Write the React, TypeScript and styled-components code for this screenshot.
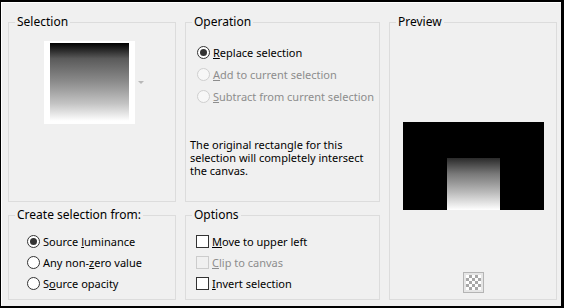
import styled, { createGlobalStyle } from 'styled-components';

const GlobalStyle = createGlobalStyle`
  body {
    margin: 0;
    font-family: "Noto Sans", "Segoe UI", sans-serif;
    font-size: 11px;
    color: #000;
  }
`;

const Frame = styled.div`
  box-sizing: border-box;
  width: 564px;
  height: 308px;
  border-style: solid;
  border-color: #000;
  border-width: 2px 3px 2px 1px;
  background: #f0f0f0;
  box-shadow: inset 1px 1px 0 #fff;
  padding: 12px 0 0 7px;
  display: grid;
  grid-template-columns: 168px 195px 168px;
  grid-template-rows: 188px 93px;
  column-gap: 9px;
  row-gap: 5px;
`;

const Group = styled.fieldset<{ $col: number; $row: string }>`
  margin: 0;
  padding: 0;
  min-width: 0;
  box-sizing: border-box;
  border: 1px solid #dcdcdc;
  display: flex;
  flex-direction: column;
  grid-column: ${(p) => p.$col};
  grid-row: ${(p) => p.$row};
`;

const Legend = styled.legend`
  margin-left: 6px;
  padding: 0 2px;
  line-height: 16px;
  font-size: 12px;
`;

const Body = styled.div<{ $pad?: string }>`
  flex: 1;
  display: flex;
  flex-direction: column;
  padding: ${(p) => p.$pad || '0'};
`;

const Center = styled.div<{ $push?: boolean }>`
  display: flex;
  align-items: center;
  justify-content: center;
  margin-top: ${(p) => (p.$push ? 'auto' : '0')};
`;

const Thumb = styled.div`
  background: #fff;
  padding: 2px 6px 3px 6px;
  margin-left: 3px;
`;

const Gradient = styled.div`
  width: 79px;
  height: 78px;
  background: linear-gradient(#000 0%, #5a5a5a 20%, #8c8c8c 50%, #c4c4c4 78%, #fff 100%);
`;

const DropArrow = styled.span`
  width: 0;
  height: 0;
  margin-left: 3px;
  border-left: 3px solid transparent;
  border-right: 3px solid transparent;
  border-top: 3px solid #b8b8b8;
`;

const Row = styled.label<{ $h?: number; $disabled?: boolean }>`
  display: flex;
  align-items: center;
  gap: 3px;
  height: ${(p) => p.$h || 21}px;
  color: ${(p) => (p.$disabled ? '#8d8d8d' : '#000')};
  white-space: nowrap;
`;

const Radio = styled.span<{ $checked?: boolean; $disabled?: boolean }>`
  box-sizing: border-box;
  width: 13px;
  height: 13px;
  border-radius: 50%;
  border: 1px solid ${(p) => (p.$disabled ? '#cfcfcf' : '#333')};
  background: ${(p) => (p.$disabled ? '#f7f7f7' : '#fff')};
  display: flex;
  align-items: center;
  justify-content: center;
  flex: none;

  &::after {
    content: '';
    width: 7px;
    height: 7px;
    border-radius: 50%;
    background: #333;
    display: ${(p) => (p.$checked ? 'block' : 'none')};
  }
`;

const Check = styled.span<{ $disabled?: boolean }>`
  box-sizing: border-box;
  width: 13px;
  height: 13px;
  border: 1px solid ${(p) => (p.$disabled ? '#cccccc' : '#333')};
  background: ${(p) => (p.$disabled ? '#f0f0f0' : '#fff')};
  flex: none;
`;

const Note = styled.p`
  margin: auto 0 24px -7px;
  line-height: 13px;
  white-space: nowrap;
`;

const PreviewImage = styled.div`
  width: 141px;
  height: 88px;
  margin-top: 92px;
  background: #000;
  display: flex;
  justify-content: center;
  align-items: flex-end;
`;

const PreviewSel = styled.div`
  width: 53px;
  height: 52px;
  background: linear-gradient(#2a2a2a 0%, #777 30%, #b8b8b8 65%, #fff 100%);
`;

const CheckerButton = styled.div`
  box-sizing: border-box;
  width: 21px;
  height: 21px;
  margin-bottom: 6px;
  border: 1px solid #b4b4b4;
  padding: 2px;
  background: #e6e6e6;

  &::after {
    content: '';
    display: block;
    width: 100%;
    height: 100%;
    background: repeating-conic-gradient(#a8a8a8 0 25%, #fff 0 50%) 0 0 / 6px 6px;
  }
`;

export default function App() {
  return (
    <>
      <GlobalStyle />
      <Frame>
        <Group $col={1} $row="1">
          <Legend>Selection</Legend>
          <Body $pad="11px 0 0 0">
            <Center>
              <Thumb>
                <Gradient />
              </Thumb>
              <DropArrow />
            </Center>
          </Body>
        </Group>
        <Group $col={2} $row="1">
          <Legend>Operation</Legend>
          <Body $pad="11px 0 0 11px">
            <Row $h={22}>
              <Radio $checked />
              <span>
                <u>R</u>eplace selection
              </span>
            </Row>
            <Row $h={22} $disabled>
              <Radio $disabled />
              <span>
                <u>A</u>dd to current selection
              </span>
            </Row>
            <Row $h={22} $disabled>
              <Radio $disabled />
              <span>
                <u>S</u>ubtract from current selection
              </span>
            </Row>
            <Note>
              The original rectangle for this
              <br />
              selection will completely intersect
              <br />
              the canvas.
            </Note>
          </Body>
        </Group>
        <Group $col={3} $row="1 / span 2">
          <Legend>Preview</Legend>
          <Body>
            <Center>
              <PreviewImage>
                <PreviewSel />
              </PreviewImage>
            </Center>
            <Center $push>
              <CheckerButton />
            </Center>
          </Body>
        </Group>
        <Group $col={1} $row="2">
          <Legend>Create selection from:</Legend>
          <Body $pad="8px 0 0 18px">
            <Row>
              <Radio $checked />
              <span>
                Source <u>l</u>uminance
              </span>
            </Row>
            <Row>
              <Radio />
              <span>
                Any non-<u>z</u>ero value
              </span>
            </Row>
            <Row>
              <Radio />
              <span>
                S<u>o</u>urce opacity
              </span>
            </Row>
          </Body>
        </Group>
        <Group $col={2} $row="2">
          <Legend>Options</Legend>
          <Body $pad="8px 0 0 10px">
            <Row>
              <Check />
              <span>
                <u>M</u>ove to upper left
              </span>
            </Row>
            <Row $disabled>
              <Check $disabled />
              <span>
                <u>C</u>lip to canvas
              </span>
            </Row>
            <Row>
              <Check />
              <span>
                <u>I</u>nvert selection
              </span>
            </Row>
          </Body>
        </Group>
      </Frame>
    </>
  );
}
